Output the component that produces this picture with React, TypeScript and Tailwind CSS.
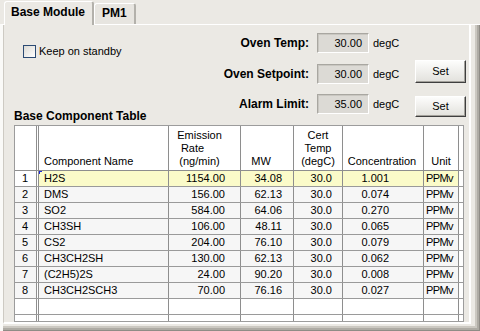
import React from "react";

type Row = {
  name: string;
  rate: string;
  mw: string;
  temp: string;
  conc: string;
  unit: string;
};

const rows: Row[] = [
  { name: "H2S", rate: "1154.00", mw: "34.08", temp: "30.0", conc: "1.001", unit: "PPMv" },
  { name: "DMS", rate: "156.00", mw: "62.13", temp: "30.0", conc: "0.074", unit: "PPMv" },
  { name: "SO2", rate: "584.00", mw: "64.06", temp: "30.0", conc: "0.270", unit: "PPMv" },
  { name: "CH3SH", rate: "106.00", mw: "48.11", temp: "30.0", conc: "0.065", unit: "PPMv" },
  { name: "CS2", rate: "204.00", mw: "76.10", temp: "30.0", conc: "0.079", unit: "PPMv" },
  { name: "CH3CH2SH", rate: "130.00", mw: "62.13", temp: "30.0", conc: "0.062", unit: "PPMv" },
  { name: "(C2H5)2S", rate: "24.00", mw: "90.20", temp: "30.0", conc: "0.008", unit: "PPMv" },
  { name: "CH3CH2SCH3", rate: "70.00", mw: "76.16", temp: "30.0", conc: "0.027", unit: "PPMv" },
];

function Field({ value }: { value: string }) {
  return (
    <div className="w-[52px] h-[20px] bg-[#dcdad5] border border-t-[#a9a7a1] border-l-[#a9a7a1] border-b-white border-r-white shadow-[inset_1px_1px_0_#c9c7c1] text-right pr-[6px] leading-[18px]">
      {value}
    </div>
  );
}

function SetButton({ extra }: { extra: string }) {
  return (
    <button
      className={`w-[51px] ${extra} bg-gradient-to-b from-[#fdfdfc] to-[#e2e1dc] border border-t-white border-l-white border-r-[#3f3f3f] border-b-[#3f3f3f] shadow-[inset_-1px_-1px_0_#a3a19b] text-[11px] leading-none`}
    >
      Set
    </button>
  );
}

function Setting({
  label,
  value,
  offset,
  button,
}: {
  label: string;
  value: string;
  offset: string;
  button?: string;
}) {
  return (
    <div className="flex items-start">
      <div className={`flex ${offset}`}>
        <div className="w-[118px] pr-[8px] text-right font-bold text-[12px] leading-[20px]">
          {label}
        </div>
        <Field value={value} />
        <div className="w-[46px] pl-[4px] leading-[20px]">degC</div>
      </div>
      {button ? <SetButton extra={button} /> : <div className="w-[51px]" />}
    </div>
  );
}

export default function App() {
  return (
    <div className="w-[480px] h-[331px] overflow-hidden bg-[#ebe9e4] font-['Liberation_Sans',Arial,sans-serif] text-[11px] text-black flex flex-col">
      {/* tab strip */}
      <div className="flex items-end h-[24px] pl-[4px] shrink-0">
        <div className="relative z-10 -mb-px h-[24px] w-[90px] bg-[#ebe9e4] border-t border-l border-white border-r-2 border-r-[#b3b1ab] rounded-t-[3px] pl-[6px] pt-[3px] font-bold text-[12px] leading-[14px]">
          Base Module
        </div>
        <div className="h-[21px] w-[42px] bg-[#e7e5e0] border-t border-l border-white border-r-2 border-r-[#b3b1ab] rounded-t-[3px] pl-[7px] pt-[2px] font-bold text-[12px] leading-[14px]">
          PM1
        </div>
      </div>

      {/* tab page */}
      <div className="h-[307px] border-t border-white border-l-[3px] border-l-[#fafaf8] pr-[9px] pb-[7px] shadow-[inset_-1px_-1px_0_#8f8c86,inset_-3px_-3px_0_#aeaba4,inset_-5px_-5px_0_#cbc8c1]">
        <div className="border-l border-l-[#cdcac3] border-r-2 border-r-white border-b-2 border-b-white pl-[10px] pr-[5px] pt-[8px]">
          {/* controls */}
          <div className="flex h-[90px]">
            <div className="flex flex-col justify-between">
              <label className="flex items-center gap-[3px] ml-[9px] mt-[12px]">
                <span className="w-[13px] h-[13px] border border-[#2b4a73] bg-gradient-to-br from-[#dcdad4] to-white" />
                <span className="leading-[13px]">Keep on standby</span>
              </label>
              <div className="font-bold text-[12px] leading-[14px] whitespace-nowrap">
                Base Component Table
              </div>
            </div>
            <div className="ml-auto -mr-[2px] flex flex-col">
              <Setting label="Oven Temp:" value="30.00" offset="" />
              <div className="mt-[7px] h-[24px]">
                <Setting label="Oven Setpoint:" value="30.00" offset="mt-[4px]" button="h-[23px]" />
              </div>
              <div className="mt-[10px]">
                <Setting label="Alarm Limit:" value="35.00" offset="" button="h-[21px] mt-[2px]" />
              </div>
            </div>
          </div>

          {/* table */}
          <div className="mt-[2px] w-[450px] h-[197px] border border-[#9c9c9c] bg-white overflow-hidden">
            <div className="flex h-[45px] border-b border-[#8e8e8e] leading-[13px]">
              <div className="w-[22px] border-r border-[#8e8e8e]" />
              <div className="w-[1px]" />
              <div className="w-[131px] border-x border-[#8e8e8e] flex items-end pl-[5px] pb-[2px]">
                Component Name
              </div>
              <div className="w-[72px] border-r border-[#8e8e8e] flex flex-col justify-end pb-[2px] text-center pr-[10px]">
                <span>Emission</span>
                <span className="pr-[14px]">Rate</span>
                <span>(ng/min)</span>
              </div>
              <div className="w-[53px] border-r border-[#8e8e8e] flex flex-col justify-end pb-[2px] text-center pr-[12px]">
                MW
              </div>
              <div className="w-[49px] border-r border-[#8e8e8e] flex flex-col justify-end pb-[2px] text-center">
                <span>Cert</span>
                <span>Temp</span>
                <span>(degC)</span>
              </div>
              <div className="w-[81px] border-r border-[#8e8e8e] flex flex-col justify-end pb-[2px] text-center pr-[2px]">
                Concentration
              </div>
              <div className="w-[35px] border-r border-[#8e8e8e] flex flex-col justify-end pb-[2px] text-center">
                Unit
              </div>
              <div className="flex-1" />
            </div>

            {rows.map((r, i) => {
              const sel = i === 0;
              const cell = sel ? "bg-[#fbfbc9]" : "bg-[#f6f6f6]";
              return (
                <div key={r.name} className={`flex h-[16px] border-b border-[#9a9a9a] leading-[15px] ${sel ? "bg-white" : "bg-[#f6f6f6]"}`}>
                  <div className="w-[22px] border-r border-[#8e8e8e] pl-[7px]">{i + 1}</div>
                  <div className="w-[1px] bg-white" />
                  <div className={`relative w-[131px] border-x border-[#8e8e8e] pl-[5px] ${cell}`}>
                    {sel && (
                      <span className="absolute left-0 top-0 w-[3px] h-[3px] border-l border-t border-[#1f2bd6]" />
                    )}
                    {r.name}
                  </div>
                  <div className={`w-[72px] border-r border-[#8e8e8e] text-right pr-[15px] ${cell}`}>{r.rate}</div>
                  <div className={`w-[53px] border-r border-[#8e8e8e] text-right pr-[11px] ${cell}`}>{r.mw}</div>
                  <div className={`w-[49px] border-r border-[#8e8e8e] text-right pr-[10px] ${cell}`}>{r.temp}</div>
                  <div className={`w-[81px] border-r border-[#8e8e8e] text-right pr-[34px] ${cell}`}>{r.conc}</div>
                  <div className={`w-[35px] border-r border-[#8e8e8e] pl-[2px] tracking-[-0.6px] whitespace-nowrap overflow-hidden ${cell}`}>{r.unit}</div>
                  <div className="flex-1 bg-white" />
                </div>
              );
            })}

            {[0, 1].map((k) => (
              <div key={k} className="flex h-[16px] border-b border-[#9a9a9a]">
                <div className="w-[22px] border-r border-[#8e8e8e]" />
                <div className="w-[1px]" />
                <div className="w-[131px] border-x border-[#8e8e8e]" />
                <div className="w-[72px] border-r border-[#8e8e8e]" />
                <div className="w-[53px] border-r border-[#8e8e8e]" />
                <div className="w-[49px] border-r border-[#8e8e8e]" />
                <div className="w-[81px] border-r border-[#8e8e8e]" />
                <div className="w-[35px] border-r border-[#8e8e8e]" />
                <div className="flex-1" />
              </div>
            ))}
          </div>
        </div>
      </div>
    </div>
  );
}
